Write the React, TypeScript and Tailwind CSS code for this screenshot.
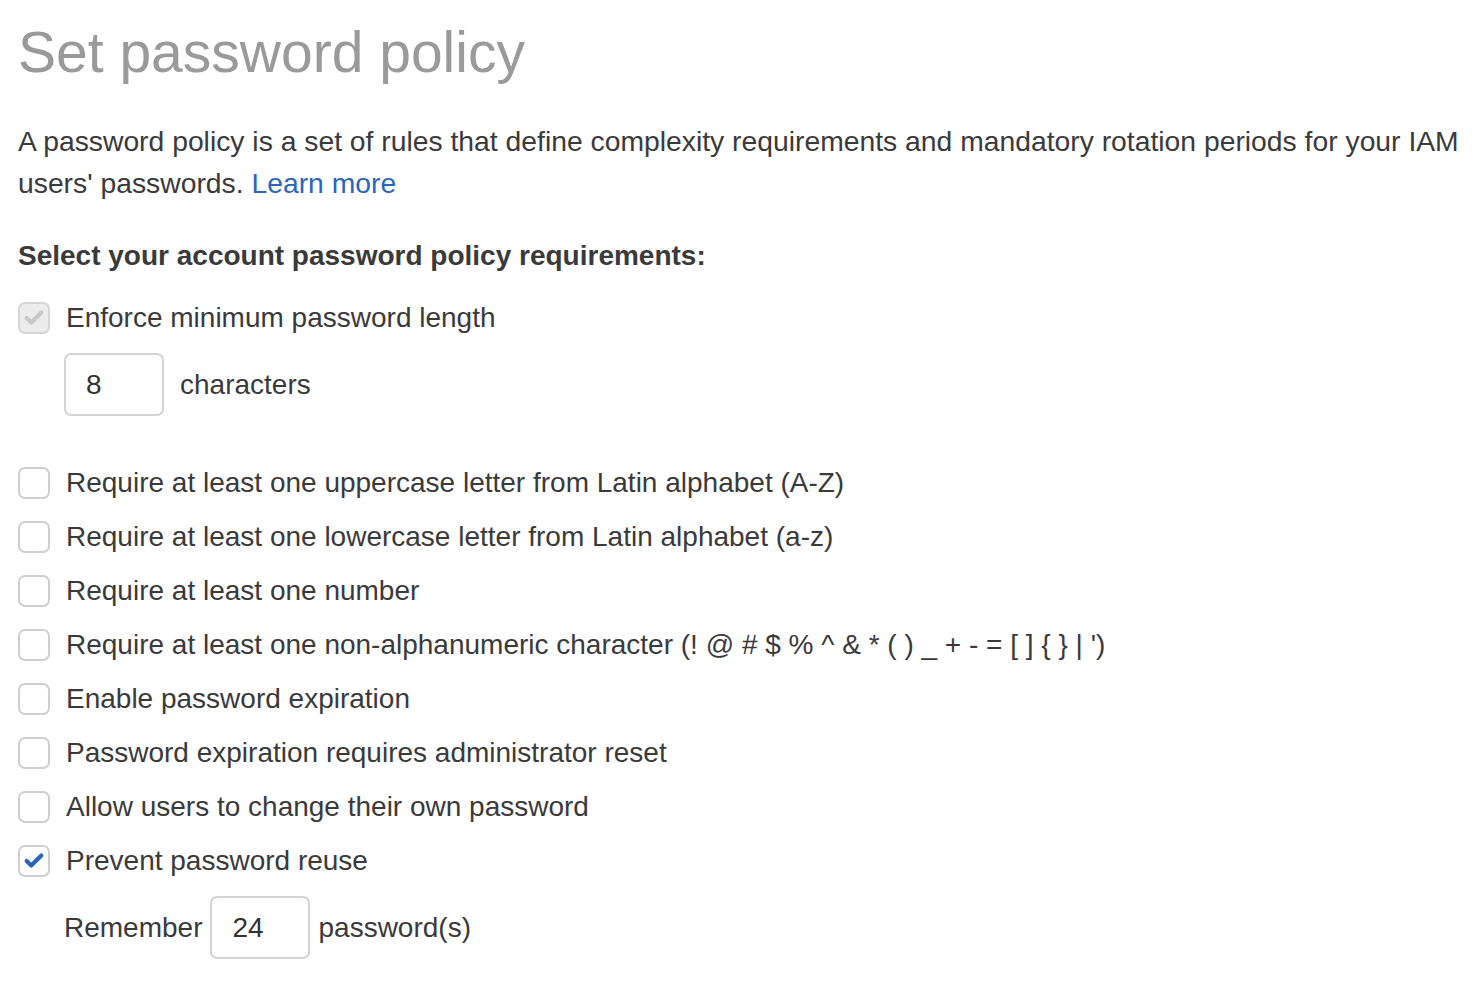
import { Check } from "lucide-react";

const rules = [
  { label: "Require at least one uppercase letter from Latin alphabet (A-Z)", checked: false },
  { label: "Require at least one lowercase letter from Latin alphabet (a-z)", checked: false },
  { label: "Require at least one number", checked: false },
  { label: "Require at least one non-alphanumeric character (! @ # $ % ^ & * ( ) _ + - = [ ] { } | ')", checked: false },
  { label: "Enable password expiration", checked: false },
  { label: "Password expiration requires administrator reset", checked: false },
  { label: "Allow users to change their own password", checked: false },
  { label: "Prevent password reuse", checked: true },
];

function Box({ checked, disabled }: { checked: boolean; disabled?: boolean }) {
  return (
    <span
      className={
        "flex h-[32px] w-[32px] shrink-0 items-center justify-center rounded-[7px] border-2 " +
        (disabled ? "border-[#d5d5d5] bg-[#ececec]" : "border-[#cfcfcf] bg-white")
      }
    >
      {checked && (
        <Check
          size={22}
          strokeWidth={4.5}
          className={disabled ? "text-[#c8c8c8]" : "text-[#2b64b8]"}
        />
      )}
    </span>
  );
}

function NumberBox({ value }: { value: string }) {
  return (
    <div className="flex h-[63px] w-[100px] shrink-0 items-center rounded-[7px] border-2 border-[#d3d3d3] bg-white pl-[20px] text-[28px] text-[#333]">
      {value}
    </div>
  );
}

export default function App() {
  return (
    <div className="min-h-screen bg-white pl-[18px] pt-[16px] font-['Liberation_Sans',Arial,sans-serif] text-[#3a3a3a]">
      <h1 className="text-[57px] leading-[72px] text-[#9a9a9a]">Set password policy</h1>

      <p className="mt-[32px] text-[28.3px] leading-[42px]">
        A password policy is a set of rules that define complexity requirements and mandatory rotation periods for your IAM
        users' passwords. <span className="text-[#2a66bd]">Learn more</span>
      </p>

      <h2 className="mt-[32px] text-[28px] font-bold leading-[40px]">Select your account password policy requirements:</h2>

      <div className="mt-[26px] flex h-[32px] items-center gap-[16px]">
        <Box checked disabled />
        <span className="text-[28px]">Enforce minimum password length</span>
      </div>

      <div className="ml-[46px] mt-[19px] flex items-center gap-[16px]">
        <NumberBox value="8" />
        <span className="text-[28px]">characters</span>
      </div>

      <div className="mt-[51px] flex flex-col gap-[22px]">
        {rules.map((r) => (
          <div key={r.label} className="flex h-[32px] items-center gap-[16px]">
            <Box checked={r.checked} />
            <span className="whitespace-nowrap text-[28px]">{r.label}</span>
          </div>
        ))}
      </div>

      <div className="ml-[46px] mt-[19px] flex items-center gap-[8px]">
        <span className="text-[28px]">Remember</span>
        <NumberBox value="24" />
        <span className="text-[28px]">password(s)</span>
      </div>
    </div>
  );
}
